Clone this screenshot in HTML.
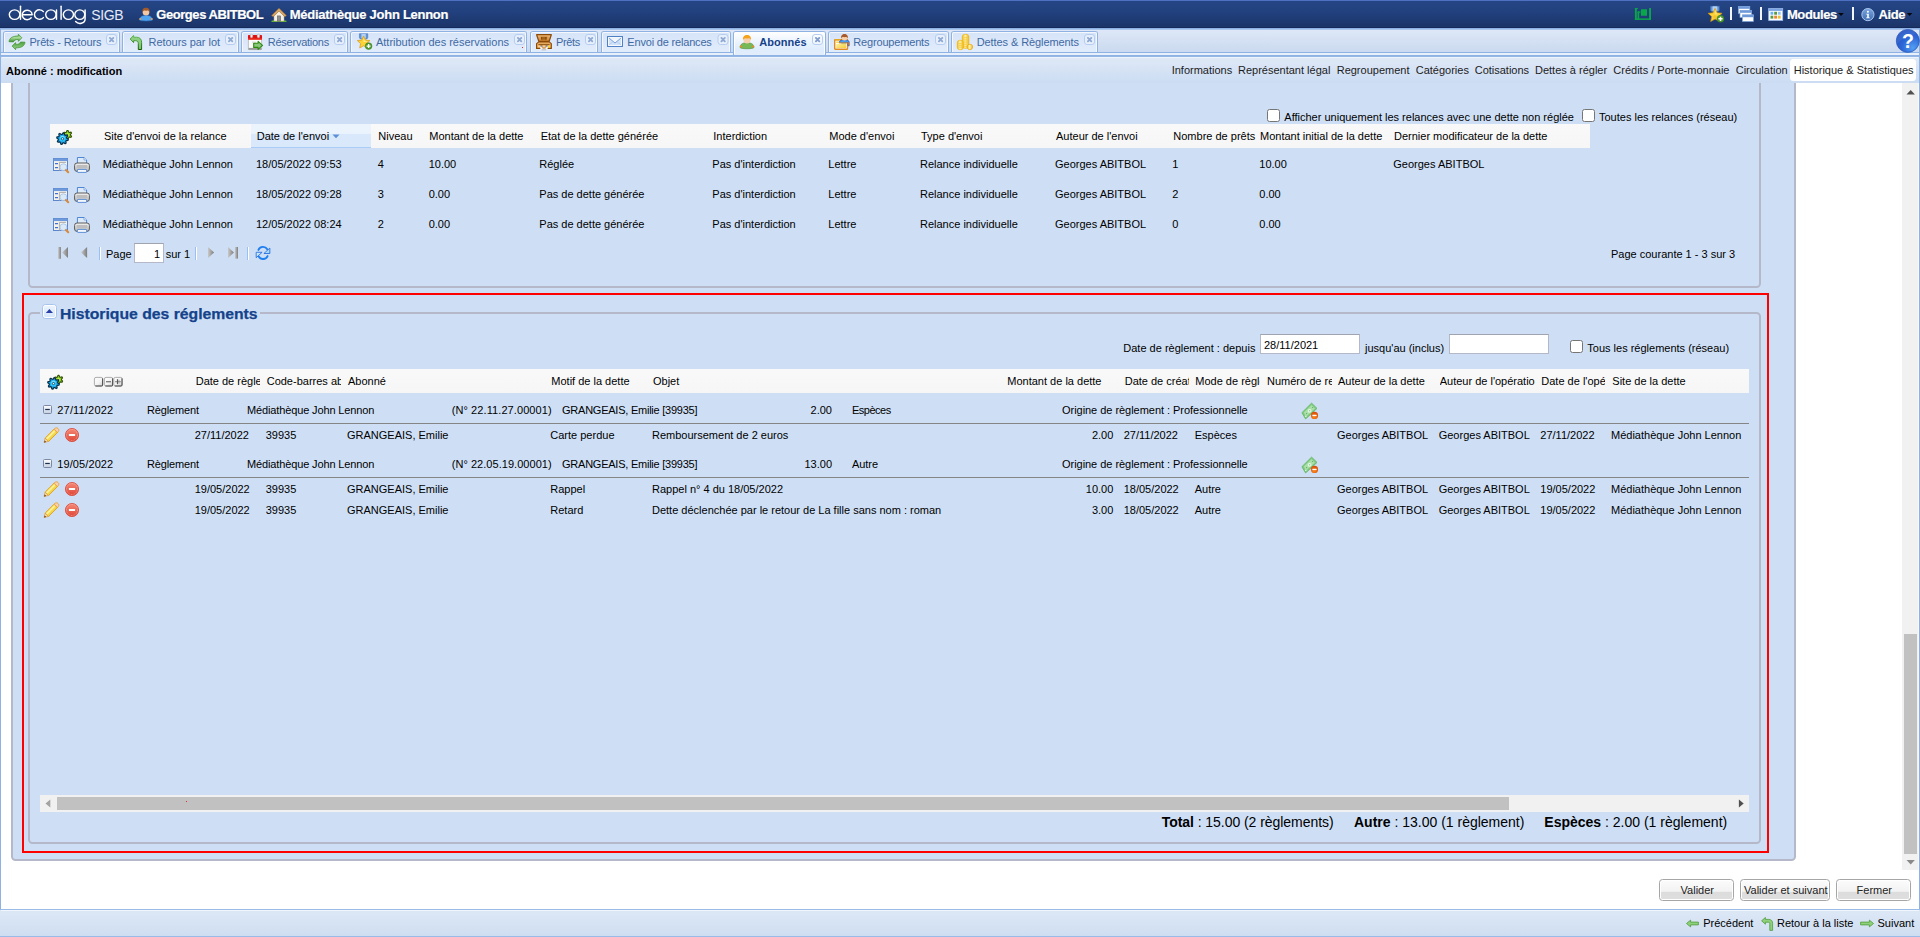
<!DOCTYPE html>
<html lang="fr"><head><meta charset="utf-8"><title>decalog SIGB</title>
<style>
html,body{margin:0;padding:0;width:1920px;height:937px;overflow:hidden;background:#fff;}
body{position:relative;font-family:"Liberation Sans",sans-serif;font-size:11px;color:#000;}
.b{position:absolute;box-sizing:border-box;}
.t{position:absolute;white-space:nowrap;font-family:"Liberation Sans",sans-serif;}
svg{overflow:visible;display:block}
</style></head><body>
<div class="b" style="left:0px;top:0px;width:1920px;height:28px;background:linear-gradient(#264585 0%,#21407d 45%,#1b3468 100%);"></div>
<div class="b" style="left:0px;top:0px;width:1920px;height:1px;background:#4d70c0;"></div>
<div class="b" style="left:0px;top:27px;width:1920px;height:1px;background:#15295a;"></div>
<div class="b" style="left:0px;top:28px;width:1920px;height:29px;background:linear-gradient(#dde7f6 0%,#dde7f6 8%,#cbdaf0 82%,#cbdaf0 100%);"></div>
<div class="b" style="left:0px;top:28px;width:1920px;height:1px;background:#8db2e3;"></div>
<div class="b" style="left:0px;top:29px;width:1920px;height:1px;background:#a9c5eb;"></div>
<div class="b" style="left:0px;top:52px;width:1920px;height:1px;background:#8db2e3;"></div>
<div class="b" style="left:0px;top:53px;width:1920px;height:2px;background:#e8f0fc;"></div>
<div class="b" style="left:0px;top:55px;width:1920px;height:1px;background:#8db2e3;"></div>
<div class="b" style="left:0px;top:56px;width:1920px;height:1px;background:#94b7e6;"></div>
<div class="b" style="left:3px;top:31px;width:117px;height:21px;border:1px solid #8db2e3;border-bottom:none;border-radius:3px 3px 0 0;background:linear-gradient(#d6e4f8 0%,#dce8fa 50%,#e1ecfb 100%);"></div>
<div class="b" style="left:4px;top:32px;width:115px;height:20px;border:1px solid #f4f8fe;border-bottom:none;border-radius:2px 2px 0 0;"></div>
<div class="b" style="left:122px;top:31px;width:117px;height:21px;border:1px solid #8db2e3;border-bottom:none;border-radius:3px 3px 0 0;background:linear-gradient(#d6e4f8 0%,#dce8fa 50%,#e1ecfb 100%);"></div>
<div class="b" style="left:123px;top:32px;width:115px;height:20px;border:1px solid #f4f8fe;border-bottom:none;border-radius:2px 2px 0 0;"></div>
<div class="b" style="left:241px;top:31px;width:107px;height:21px;border:1px solid #8db2e3;border-bottom:none;border-radius:3px 3px 0 0;background:linear-gradient(#d6e4f8 0%,#dce8fa 50%,#e1ecfb 100%);"></div>
<div class="b" style="left:242px;top:32px;width:105px;height:20px;border:1px solid #f4f8fe;border-bottom:none;border-radius:2px 2px 0 0;"></div>
<div class="b" style="left:350px;top:31px;width:177px;height:21px;border:1px solid #8db2e3;border-bottom:none;border-radius:3px 3px 0 0;background:linear-gradient(#d6e4f8 0%,#dce8fa 50%,#e1ecfb 100%);"></div>
<div class="b" style="left:351px;top:32px;width:175px;height:20px;border:1px solid #f4f8fe;border-bottom:none;border-radius:2px 2px 0 0;"></div>
<div class="b" style="left:530px;top:31px;width:68px;height:21px;border:1px solid #8db2e3;border-bottom:none;border-radius:3px 3px 0 0;background:linear-gradient(#d6e4f8 0%,#dce8fa 50%,#e1ecfb 100%);"></div>
<div class="b" style="left:531px;top:32px;width:66px;height:20px;border:1px solid #f4f8fe;border-bottom:none;border-radius:2px 2px 0 0;"></div>
<div class="b" style="left:601px;top:31px;width:130px;height:21px;border:1px solid #8db2e3;border-bottom:none;border-radius:3px 3px 0 0;background:linear-gradient(#d6e4f8 0%,#dce8fa 50%,#e1ecfb 100%);"></div>
<div class="b" style="left:602px;top:32px;width:128px;height:20px;border:1px solid #f4f8fe;border-bottom:none;border-radius:2px 2px 0 0;"></div>
<div class="b" style="left:733px;top:31px;width:93px;height:24px;border:1px solid #8db2e3;border-bottom:none;border-radius:3px 3px 0 0;background:linear-gradient(#ffffff 0%,#f3f8fe 25%,#deecfd 75%,#e3edfb 100%);"></div>
<div class="b" style="left:734px;top:32px;width:91px;height:22px;border:1px solid #fff;border-bottom:none;border-radius:2px 2px 0 0;"></div>
<div class="b" style="left:828px;top:31px;width:121px;height:21px;border:1px solid #8db2e3;border-bottom:none;border-radius:3px 3px 0 0;background:linear-gradient(#d6e4f8 0%,#dce8fa 50%,#e1ecfb 100%);"></div>
<div class="b" style="left:829px;top:32px;width:119px;height:20px;border:1px solid #f4f8fe;border-bottom:none;border-radius:2px 2px 0 0;"></div>
<div class="b" style="left:951px;top:31px;width:147px;height:21px;border:1px solid #8db2e3;border-bottom:none;border-radius:3px 3px 0 0;background:linear-gradient(#d6e4f8 0%,#dce8fa 50%,#e1ecfb 100%);"></div>
<div class="b" style="left:952px;top:32px;width:145px;height:20px;border:1px solid #f4f8fe;border-bottom:none;border-radius:2px 2px 0 0;"></div>
<div class="b" style="left:1px;top:83px;width:1918px;height:826px;background:#fff;"></div>
<div class="b" style="left:11px;top:70px;width:1785px;height:791px;background:#cedff5;border:2px solid #b5b8c8;border-radius:4.5px;"></div>
<div class="b" style="left:28px;top:70px;width:1733px;height:218px;border:2px solid #b5b8c8;border-radius:4.5px;"></div>
<div class="b" style="left:1px;top:57px;width:1918px;height:26px;background:linear-gradient(#dfe9f7 0%,#d8e4f5 40%,#cbdcf3 100%);"></div>
<div class="b" style="left:2px;top:57px;width:1916px;height:1px;background:#eef4fb;"></div>
<div class="b" style="left:1790px;top:59px;width:126px;height:22px;background:#fff;border-radius:3.5px;"></div>
<div class="b" style="left:0px;top:28px;width:1px;height:881px;background:#8db2e3;"></div>
<div class="b" style="left:1919px;top:28px;width:1px;height:881px;background:#8db2e3;"></div>
<div class="b" style="left:22px;top:293px;width:1747px;height:560px;border:2px solid #f00;"></div>
<div class="b" style="left:28px;top:312px;width:1733px;height:532px;border:2px solid #b5b8c8;border-radius:4.5px;"></div>
<div class="b" style="left:40px;top:304px;width:220px;height:18px;background:#cedff5;"></div>
<div class="b" style="left:50px;top:124px;width:1540px;height:24px;background:linear-gradient(#f9f9f9,#f6f6f6);"></div>
<div class="b" style="left:251px;top:124px;width:120px;height:24px;background:linear-gradient(#ebf3fd 0%,#ebf3fd 41%,#d9e8fb 43%,#d9e8fb 100%);border-bottom:1px solid #aaccf6;"></div>
<div class="b" style="left:134px;top:243px;width:30px;height:20px;background:#fff;border:1px solid #b5b8c8;border-top-color:#a0a3b0;"></div>
<div class="b" style="left:1260px;top:334px;width:100px;height:20px;background:#fff;border:1px solid #b5b8c8;border-top-color:#a0a3b0;"></div>
<div class="b" style="left:1449px;top:334px;width:100px;height:20px;background:#fff;border:1px solid #b5b8c8;border-top-color:#a0a3b0;"></div>
<div class="b" style="left:40px;top:369px;width:1709px;height:24px;background:linear-gradient(#f9f9f9,#f6f6f6);"></div>
<div class="b" style="left:40px;top:423px;width:1709px;height:1px;background:#858585;"></div>
<div class="b" style="left:40px;top:477px;width:1709px;height:1px;background:#858585;"></div>
<div class="b" style="left:40px;top:795px;width:1709px;height:17px;background:#f1f1f1;"></div>
<div class="b" style="left:57px;top:797px;width:1452px;height:13px;background:#c1c1c1;"></div>
<div class="b" style="left:186px;top:801px;width:1px;height:1px;background:#e03030;"></div>
<div class="b" style="left:522px;top:47px;width:1px;height:1px;background:#e03030;"></div>
<div class="b" style="left:1902px;top:83px;width:16px;height:787px;background:#f1f1f1;"></div>
<div class="b" style="left:1918px;top:83px;width:1px;height:787px;background:#f8f8f8;"></div>
<div class="b" style="left:1904px;top:634px;width:13px;height:220px;background:#c1c1c1;"></div>
<div class="b" style="left:0px;top:909px;width:1920px;height:28px;background:linear-gradient(#dde8f6,#cfdef1);border-top:1px solid #99bbe8;border-bottom:1px solid #99bbe8;"></div>
<div class="b" style="left:1px;top:910px;width:1918px;height:1px;background:#f1f6fc;"></div>
<div class="b" style="left:1659px;top:879px;width:75px;height:22px;border:1px solid #a6a6a6;border-radius:3.5px;background:#fff;"></div>
<div class="b" style="left:1661px;top:881px;width:71px;height:18px;border-radius:1.5px;background:linear-gradient(#fbfbfb 0%,#f2f2f2 58%,#dcdcdc 60%,#dedede 100%);"></div>
<div class="b" style="left:1740px;top:879px;width:90px;height:22px;border:1px solid #a6a6a6;border-radius:3.5px;background:#fff;"></div>
<div class="b" style="left:1742px;top:881px;width:86px;height:18px;border-radius:1.5px;background:linear-gradient(#fbfbfb 0%,#f2f2f2 58%,#dcdcdc 60%,#dedede 100%);"></div>
<div class="b" style="left:1836px;top:879px;width:75px;height:22px;border:1px solid #a6a6a6;border-radius:3.5px;background:#fff;"></div>
<div class="b" style="left:1838px;top:881px;width:71px;height:18px;border-radius:1.5px;background:linear-gradient(#fbfbfb 0%,#f2f2f2 58%,#dcdcdc 60%,#dedede 100%);"></div>
<div class="b" style="left:1267px;top:109px;width:13px;height:13px;background:#fff;border:1px solid #767676;border-radius:2.5px;"></div>
<div class="b" style="left:1582px;top:109px;width:13px;height:13px;background:#fff;border:1px solid #767676;border-radius:2.5px;"></div>
<div class="b" style="left:1570px;top:340px;width:13px;height:13px;background:#fff;border:1px solid #767676;border-radius:2.5px;"></div>
<span class="t" style="left:91.3px;top:7.0px;font-size:14px;line-height:16px;color:#e4eaf8;letter-spacing:-0.417px;">SIGB</span>
<span class="t" style="left:156.3px;top:7.1px;font-size:13px;line-height:16px;font-weight:bold;color:#fff;letter-spacing:-0.444px;-webkit-text-stroke:0.2px #fff;text-shadow:0.5px 0.5px 0 rgba(10,20,50,.35);">Georges ABITBOL</span>
<span class="t" style="left:289.8px;top:7.1px;font-size:13px;line-height:16px;font-weight:bold;color:#fff;letter-spacing:-0.273px;-webkit-text-stroke:0.2px #fff;text-shadow:0.5px 0.5px 0 rgba(10,20,50,.35);">Médiathèque John Lennon</span>
<span class="t" style="left:1786.9px;top:7.1px;font-size:13px;line-height:16px;font-weight:bold;color:#fff;letter-spacing:-0.391px;-webkit-text-stroke:0.2px #fff;text-shadow:0.5px 0.5px 0 rgba(10,20,50,.35);">Modules</span>
<span class="t" style="left:1878.5px;top:7.1px;font-size:13px;line-height:16px;font-weight:bold;color:#fff;letter-spacing:-0.393px;-webkit-text-stroke:0.2px #fff;text-shadow:0.5px 0.5px 0 rgba(10,20,50,.35);">Aide</span>
<div class="b" style="left:1730px;top:7px;width:2px;height:13px;background:#f2f5fc;"></div>
<div class="b" style="left:1760px;top:7px;width:2px;height:13px;background:#f2f5fc;"></div>
<div class="b" style="left:1852px;top:7px;width:2px;height:13px;background:#f2f5fc;"></div>
<span class="t" style="left:29.4px;top:35.0px;font-size:11px;line-height:14px;color:#416aa3;letter-spacing:-0.131px;">Prêts - Retours</span>
<span class="t" style="left:148.5px;top:35.0px;font-size:11px;line-height:14px;color:#416aa3;letter-spacing:-0.044px;">Retours par lot</span>
<span class="t" style="left:267.8px;top:35.0px;font-size:11px;line-height:14px;color:#416aa3;letter-spacing:-0.250px;">Réservations</span>
<span class="t" style="left:376px;top:35.0px;font-size:11px;line-height:14px;color:#416aa3;letter-spacing:-0.011px;">Attribution des réservations</span>
<span class="t" style="left:556px;top:35.0px;font-size:11px;line-height:14px;color:#416aa3;letter-spacing:-0.338px;">Prêts</span>
<span class="t" style="left:627.3px;top:35.0px;font-size:11px;line-height:14px;color:#416aa3;letter-spacing:-0.180px;">Envoi de relances</span>
<span class="t" style="left:853.3px;top:35.0px;font-size:11px;line-height:14px;color:#416aa3;letter-spacing:-0.175px;">Regroupements</span>
<span class="t" style="left:976.7px;top:35.0px;font-size:11px;line-height:14px;color:#416aa3;letter-spacing:-0.086px;">Dettes &amp; Règlements</span>
<span class="t" style="left:759.3px;top:35.0px;font-size:11px;line-height:14px;font-weight:bold;color:#15428b;letter-spacing:0.048px;">Abonnés</span>
<span class="t" style="left:6px;top:64.0px;font-size:11px;line-height:14px;font-weight:bold;">Abonné : modification</span>
<span class="t" style="left:1171.7px;top:63.0px;font-size:11px;line-height:14px;color:#1c1c1c;">Informations</span>
<span class="t" style="left:1238px;top:63.0px;font-size:11px;line-height:14px;color:#1c1c1c;">Représentant légal</span>
<span class="t" style="left:1336.7px;top:63.0px;font-size:11px;line-height:14px;color:#1c1c1c;">Regroupement</span>
<span class="t" style="left:1415.7px;top:63.0px;font-size:11px;line-height:14px;color:#1c1c1c;">Catégories</span>
<span class="t" style="left:1474.7px;top:63.0px;font-size:11px;line-height:14px;color:#1c1c1c;">Cotisations</span>
<span class="t" style="left:1535px;top:63.0px;font-size:11px;line-height:14px;color:#1c1c1c;">Dettes à régler</span>
<span class="t" style="left:1613.3px;top:63.0px;font-size:11px;line-height:14px;color:#1c1c1c;">Crédits / Porte-monnaie</span>
<span class="t" style="left:1735.7px;top:63.0px;font-size:11px;line-height:14px;color:#1c1c1c;">Circulation</span>
<span class="t" style="left:1793.7px;top:63.0px;font-size:11px;line-height:14px;color:#1c1c1c;">Historique &amp; Statistiques</span>
<span class="t" style="left:1284.3px;top:110.0px;font-size:11px;line-height:14px;">Afficher uniquement les relances avec une dette non réglée</span>
<span class="t" style="left:1599px;top:110.0px;font-size:11px;line-height:14px;">Toutes les relances (réseau)</span>
<span class="t" style="left:104px;top:129.0px;font-size:11px;line-height:14px;">Site d'envoi de la relance</span>
<span class="t" style="left:256.7px;top:129.0px;font-size:11px;line-height:14px;">Date de l'envoi</span>
<span class="t" style="left:378.3px;top:129.0px;font-size:11px;line-height:14px;">Niveau</span>
<span class="t" style="left:429.3px;top:129.0px;font-size:11px;line-height:14px;">Montant de la dette</span>
<span class="t" style="left:540.7px;top:129.0px;font-size:11px;line-height:14px;">Etat de la dette générée</span>
<span class="t" style="left:713.3px;top:129.0px;font-size:11px;line-height:14px;">Interdiction</span>
<span class="t" style="left:829.3px;top:129.0px;font-size:11px;line-height:14px;">Mode d'envoi</span>
<span class="t" style="left:921px;top:129.0px;font-size:11px;line-height:14px;">Type d'envoi</span>
<span class="t" style="left:1056px;top:129.0px;font-size:11px;line-height:14px;">Auteur de l'envoi</span>
<span class="t" style="left:1173.3px;top:129.0px;font-size:11px;line-height:14px;">Nombre de prêts</span>
<span class="t" style="left:1260px;top:129.0px;font-size:11px;line-height:14px;">Montant initial de la dette</span>
<span class="t" style="left:1394px;top:129.0px;font-size:11px;line-height:14px;">Dernier modificateur de la dette</span>
<span class="t" style="left:102.7px;top:157.0px;font-size:11px;line-height:14px;">Médiathèque John Lennon</span>
<span class="t" style="left:256px;top:157.0px;font-size:11px;line-height:14px;">18/05/2022 09:53</span>
<span class="t" style="left:377.7px;top:157.0px;font-size:11px;line-height:14px;">4</span>
<span class="t" style="left:428.7px;top:157.0px;font-size:11px;line-height:14px;">10.00</span>
<span class="t" style="left:539.3px;top:157.0px;font-size:11px;line-height:14px;">Réglée</span>
<span class="t" style="left:712.3px;top:157.0px;font-size:11px;line-height:14px;">Pas d'interdiction</span>
<span class="t" style="left:828.3px;top:157.0px;font-size:11px;line-height:14px;">Lettre</span>
<span class="t" style="left:920px;top:157.0px;font-size:11px;line-height:14px;">Relance individuelle</span>
<span class="t" style="left:1055px;top:157.0px;font-size:11px;line-height:14px;">Georges ABITBOL</span>
<span class="t" style="left:1172.3px;top:157.0px;font-size:11px;line-height:14px;">1</span>
<span class="t" style="left:1259.3px;top:157.0px;font-size:11px;line-height:14px;">10.00</span>
<span class="t" style="left:1393.3px;top:157.0px;font-size:11px;line-height:14px;">Georges ABITBOL</span>
<span class="t" style="left:102.7px;top:187.0px;font-size:11px;line-height:14px;">Médiathèque John Lennon</span>
<span class="t" style="left:256px;top:187.0px;font-size:11px;line-height:14px;">18/05/2022 09:28</span>
<span class="t" style="left:377.7px;top:187.0px;font-size:11px;line-height:14px;">3</span>
<span class="t" style="left:428.7px;top:187.0px;font-size:11px;line-height:14px;">0.00</span>
<span class="t" style="left:539.3px;top:187.0px;font-size:11px;line-height:14px;">Pas de dette générée</span>
<span class="t" style="left:712.3px;top:187.0px;font-size:11px;line-height:14px;">Pas d'interdiction</span>
<span class="t" style="left:828.3px;top:187.0px;font-size:11px;line-height:14px;">Lettre</span>
<span class="t" style="left:920px;top:187.0px;font-size:11px;line-height:14px;">Relance individuelle</span>
<span class="t" style="left:1055px;top:187.0px;font-size:11px;line-height:14px;">Georges ABITBOL</span>
<span class="t" style="left:1172.3px;top:187.0px;font-size:11px;line-height:14px;">2</span>
<span class="t" style="left:1259.3px;top:187.0px;font-size:11px;line-height:14px;">0.00</span>
<span class="t" style="left:102.7px;top:217.0px;font-size:11px;line-height:14px;">Médiathèque John Lennon</span>
<span class="t" style="left:256px;top:217.0px;font-size:11px;line-height:14px;">12/05/2022 08:24</span>
<span class="t" style="left:377.7px;top:217.0px;font-size:11px;line-height:14px;">2</span>
<span class="t" style="left:428.7px;top:217.0px;font-size:11px;line-height:14px;">0.00</span>
<span class="t" style="left:539.3px;top:217.0px;font-size:11px;line-height:14px;">Pas de dette générée</span>
<span class="t" style="left:712.3px;top:217.0px;font-size:11px;line-height:14px;">Pas d'interdiction</span>
<span class="t" style="left:828.3px;top:217.0px;font-size:11px;line-height:14px;">Lettre</span>
<span class="t" style="left:920px;top:217.0px;font-size:11px;line-height:14px;">Relance individuelle</span>
<span class="t" style="left:1055px;top:217.0px;font-size:11px;line-height:14px;">Georges ABITBOL</span>
<span class="t" style="left:1172.3px;top:217.0px;font-size:11px;line-height:14px;">0</span>
<span class="t" style="left:1259.3px;top:217.0px;font-size:11px;line-height:14px;">0.00</span>
<span class="t" style="left:106px;top:247.0px;font-size:11px;line-height:14px;">Page</span>
<span class="t" style="left:165.7px;top:247.0px;font-size:11px;line-height:14px;">sur 1</span>
<span class="t" style="right:1760px;top:247.0px;font-size:11px;line-height:14px;">1</span>
<span class="t" style="left:1611px;top:247.0px;font-size:11px;line-height:14px;">Page courante 1 - 3 sur 3</span>
<span class="t" style="left:60.4px;top:304.0px;font-size:14.7px;line-height:20px;font-weight:bold;color:#15428b;transform-origin:0 50%;transform:scaleX(1.0712);-webkit-text-stroke:0.25px #15428b;">Historique des réglements</span>
<span class="t" style="left:1123.3px;top:341.0px;font-size:11px;line-height:14px;">Date de règlement : depuis</span>
<span class="t" style="left:1264px;top:338.0px;font-size:11px;line-height:14px;">28/11/2021</span>
<span class="t" style="left:1365px;top:341.0px;font-size:11px;line-height:14px;">jusqu'au (inclus)</span>
<span class="t" style="left:1587.3px;top:341.0px;font-size:11px;line-height:14px;">Tous les réglements (réseau)</span>
<span class="t" style="left:195.7px;top:374.0px;font-size:11px;line-height:14px;width:64.5px;overflow:hidden;">Date de règlement</span>
<span class="t" style="left:266.7px;top:374.0px;font-size:11px;line-height:14px;width:74px;overflow:hidden;">Code-barres abonné</span>
<span class="t" style="left:348px;top:374.0px;font-size:11px;line-height:14px;">Abonné</span>
<span class="t" style="left:551.3px;top:374.0px;font-size:11px;line-height:14px;">Motif de la dette</span>
<span class="t" style="left:653px;top:374.0px;font-size:11px;line-height:14px;">Objet</span>
<span class="t" style="left:1007.3px;top:374.0px;font-size:11px;line-height:14px;">Montant de la dette</span>
<span class="t" style="left:1124.7px;top:374.0px;font-size:11px;line-height:14px;width:64.5px;overflow:hidden;">Date de création</span>
<span class="t" style="left:1195.3px;top:374.0px;font-size:11px;line-height:14px;width:64.5px;overflow:hidden;">Mode de règlement</span>
<span class="t" style="left:1267px;top:374.0px;font-size:11px;line-height:14px;width:64.5px;overflow:hidden;">Numéro de reçu</span>
<span class="t" style="left:1338px;top:374.0px;font-size:11px;line-height:14px;">Auteur de la dette</span>
<span class="t" style="left:1439.7px;top:374.0px;font-size:11px;line-height:14px;width:95px;overflow:hidden;">Auteur de l'opération</span>
<span class="t" style="left:1541.3px;top:374.0px;font-size:11px;line-height:14px;width:64px;overflow:hidden;">Date de l'opération</span>
<span class="t" style="left:1612.3px;top:374.0px;font-size:11px;line-height:14px;">Site de la dette</span>
<span class="t" style="left:57.3px;top:403.0px;font-size:11px;line-height:14px;letter-spacing:0.175px;">27/11/2022</span>
<span class="t" style="left:147px;top:403.0px;font-size:11px;line-height:14px;letter-spacing:-0.134px;">Règlement</span>
<span class="t" style="left:247px;top:403.0px;font-size:11px;line-height:14px;letter-spacing:-0.130px;">Médiathèque John Lennon</span>
<span class="t" style="left:451.7px;top:403.0px;font-size:11px;line-height:14px;letter-spacing:0.086px;">(N° 22.11.27.00001)</span>
<span class="t" style="left:562px;top:403.0px;font-size:11px;line-height:14px;letter-spacing:-0.237px;">GRANGEAIS, Emilie [39935]</span>
<span class="t" style="right:1088px;top:403.0px;font-size:11px;line-height:14px;">2.00</span>
<span class="t" style="left:852px;top:403.0px;font-size:11px;line-height:14px;letter-spacing:-0.500px;">Espèces</span>
<span class="t" style="left:1062px;top:403.0px;font-size:11px;line-height:14px;letter-spacing:-0.037px;">Origine de règlement : Professionnelle</span>
<span class="t" style="left:57.3px;top:457.0px;font-size:11px;line-height:14px;letter-spacing:0.094px;">19/05/2022</span>
<span class="t" style="left:147px;top:457.0px;font-size:11px;line-height:14px;letter-spacing:-0.134px;">Règlement</span>
<span class="t" style="left:247px;top:457.0px;font-size:11px;line-height:14px;letter-spacing:-0.130px;">Médiathèque John Lennon</span>
<span class="t" style="left:451.7px;top:457.0px;font-size:11px;line-height:14px;letter-spacing:0.042px;">(N° 22.05.19.00001)</span>
<span class="t" style="left:562px;top:457.0px;font-size:11px;line-height:14px;letter-spacing:-0.237px;">GRANGEAIS, Emilie [39935]</span>
<span class="t" style="right:1088px;top:457.0px;font-size:11px;line-height:14px;">13.00</span>
<span class="t" style="left:852px;top:457.0px;font-size:11px;line-height:14px;letter-spacing:-0.059px;">Autre</span>
<span class="t" style="left:1062px;top:457.0px;font-size:11px;line-height:14px;letter-spacing:-0.037px;">Origine de règlement : Professionnelle</span>
<span class="t" style="left:194.7px;top:428.0px;font-size:11px;line-height:14px;">27/11/2022</span>
<span class="t" style="left:265.7px;top:428.0px;font-size:11px;line-height:14px;">39935</span>
<span class="t" style="left:347px;top:428.0px;font-size:11px;line-height:14px;">GRANGEAIS, Emilie</span>
<span class="t" style="left:550.3px;top:428.0px;font-size:11px;line-height:14px;">Carte perdue</span>
<span class="t" style="left:652px;top:428.0px;font-size:11px;line-height:14px;">Remboursement de 2 euros</span>
<span class="t" style="right:806.7px;top:428.0px;font-size:11px;line-height:14px;">2.00</span>
<span class="t" style="left:1123.7px;top:428.0px;font-size:11px;line-height:14px;">27/11/2022</span>
<span class="t" style="left:1194.7px;top:428.0px;font-size:11px;line-height:14px;">Espèces</span>
<span class="t" style="left:1337px;top:428.0px;font-size:11px;line-height:14px;">Georges ABITBOL</span>
<span class="t" style="left:1438.7px;top:428.0px;font-size:11px;line-height:14px;">Georges ABITBOL</span>
<span class="t" style="left:1540.3px;top:428.0px;font-size:11px;line-height:14px;">27/11/2022</span>
<span class="t" style="left:1611px;top:428.0px;font-size:11px;line-height:14px;">Médiathèque John Lennon</span>
<span class="t" style="left:194.7px;top:482.0px;font-size:11px;line-height:14px;">19/05/2022</span>
<span class="t" style="left:265.7px;top:482.0px;font-size:11px;line-height:14px;">39935</span>
<span class="t" style="left:347px;top:482.0px;font-size:11px;line-height:14px;">GRANGEAIS, Emilie</span>
<span class="t" style="left:550.3px;top:482.0px;font-size:11px;line-height:14px;">Rappel</span>
<span class="t" style="left:652px;top:482.0px;font-size:11px;line-height:14px;">Rappel n° 4 du 18/05/2022</span>
<span class="t" style="right:806.7px;top:482.0px;font-size:11px;line-height:14px;">10.00</span>
<span class="t" style="left:1123.7px;top:482.0px;font-size:11px;line-height:14px;">18/05/2022</span>
<span class="t" style="left:1194.7px;top:482.0px;font-size:11px;line-height:14px;">Autre</span>
<span class="t" style="left:1337px;top:482.0px;font-size:11px;line-height:14px;">Georges ABITBOL</span>
<span class="t" style="left:1438.7px;top:482.0px;font-size:11px;line-height:14px;">Georges ABITBOL</span>
<span class="t" style="left:1540.3px;top:482.0px;font-size:11px;line-height:14px;">19/05/2022</span>
<span class="t" style="left:1611px;top:482.0px;font-size:11px;line-height:14px;">Médiathèque John Lennon</span>
<span class="t" style="left:194.7px;top:503.0px;font-size:11px;line-height:14px;">19/05/2022</span>
<span class="t" style="left:265.7px;top:503.0px;font-size:11px;line-height:14px;">39935</span>
<span class="t" style="left:347px;top:503.0px;font-size:11px;line-height:14px;">GRANGEAIS, Emilie</span>
<span class="t" style="left:550.3px;top:503.0px;font-size:11px;line-height:14px;">Retard</span>
<span class="t" style="left:652px;top:503.0px;font-size:11px;line-height:14px;">Dette déclenchée par le retour de La fille sans nom : roman</span>
<span class="t" style="right:806.7px;top:503.0px;font-size:11px;line-height:14px;">3.00</span>
<span class="t" style="left:1123.7px;top:503.0px;font-size:11px;line-height:14px;">18/05/2022</span>
<span class="t" style="left:1194.7px;top:503.0px;font-size:11px;line-height:14px;">Autre</span>
<span class="t" style="left:1337px;top:503.0px;font-size:11px;line-height:14px;">Georges ABITBOL</span>
<span class="t" style="left:1438.7px;top:503.0px;font-size:11px;line-height:14px;">Georges ABITBOL</span>
<span class="t" style="left:1540.3px;top:503.0px;font-size:11px;line-height:14px;">19/05/2022</span>
<span class="t" style="left:1611px;top:503.0px;font-size:11px;line-height:14px;">Médiathèque John Lennon</span>
<span class="t" style="left:1161.7px;top:813.0px;font-size:14px;line-height:18px;letter-spacing:-0.05px;"><b>Total</b> : 15.00 (2 règlements)</span>
<span class="t" style="left:1354px;top:813.0px;font-size:14px;line-height:18px;"><b>Autre</b> : 13.00 (1 règlement)</span>
<span class="t" style="left:1544.3px;top:813.0px;font-size:14px;line-height:18px;"><b>Espèces</b> : 2.00 (1 règlement)</span>
<span class="t" style="left:1637.3px;top:883.0px;font-size:11px;line-height:14px;color:#222;width:120px;text-align:center;">Valider</span>
<span class="t" style="left:1725.8px;top:883.0px;font-size:11px;line-height:14px;color:#222;width:120px;text-align:center;">Valider et suivant</span>
<span class="t" style="left:1814.3px;top:883.0px;font-size:11px;line-height:14px;color:#222;width:120px;text-align:center;">Fermer</span>
<span class="t" style="left:1703.2px;top:916.0px;font-size:11px;line-height:14px;">Précédent</span>
<span class="t" style="left:1777px;top:916.0px;font-size:11px;line-height:14px;">Retour à la liste</span>
<span class="t" style="left:1877.5px;top:916.0px;font-size:11px;line-height:14px;">Suivant</span>
<svg class="b" style="left:9px;top:34px;" width="16" height="16" viewBox="0 0 16 16"><defs><linearGradient id="ggn" x1="0" y1="0" x2="0" y2="1"><stop offset="0" stop-color="#6fbd5e"/><stop offset=".45" stop-color="#a9dc9a"/><stop offset="1" stop-color="#3f8f30"/></linearGradient><linearGradient id="ggd" x1="0" y1="0" x2="0" y2="1"><stop offset="0" stop-color="#9ad68c"/><stop offset="1" stop-color="#4fa040"/></linearGradient></defs><path d="M0 7.7C0.5 3.6 4 2 9.35 2L9.35 0.2L12.9 3.8L9.35 7.4L9.35 5.5C6.6 5.4 5 6.4 4.5 7.9Z" fill="url(#ggn)" stroke="#3f8f30" stroke-width=".7" stroke-linejoin="round"/><path d="M0 7.7C0.5 3.6 4 2 9.35 2L9.35 0.2L12.9 3.8L9.35 7.4L9.35 5.5C6.6 5.4 5 6.4 4.5 7.9Z" transform="rotate(180 8 7.95)" fill="url(#ggd)" stroke="#3f8f30" stroke-width=".7" stroke-linejoin="round"/></svg>
<svg class="b" style="left:128px;top:34px;" width="16" height="16" viewBox="0 0 16 16"><defs><linearGradient id="grt" x1="0" y1="0" x2="0" y2="1"><stop offset="0" stop-color="#8fd384"/><stop offset=".5" stop-color="#8ccc80"/><stop offset="1" stop-color="#7cc470"/></linearGradient><linearGradient id="grs" x1="0" y1="0" x2="0" y2="1"><stop offset="0" stop-color="#6cbc5c"/><stop offset=".5" stop-color="#3c8c2c"/><stop offset="1" stop-color="#145808"/></linearGradient></defs><path d="M2.2 5L5.6 1.3L5.6 3.2L8.6 3.2C11.9 3.2 13.6 5.3 13.6 8.4L13.6 15.5L10.3 15.5L10.3 9.4C10.3 7.6 9.2 6.7 7.6 6.7L5.6 6.7L5.6 8.6Z" fill="url(#grt)" stroke="url(#grs)" stroke-width="1" stroke-linejoin="round"/></svg>
<svg class="b" style="left:248px;top:34px;" width="16" height="16" viewBox="0 0 16 16"><rect x="0.4" y="1.4" width="13.2" height="14.2" rx=".8" fill="#fdfdfd" stroke="#b4b4b4" stroke-width=".8"/><rect x="0.4" y="13.9" width="13.2" height="1.9" fill="#9a9a9a"/><rect x="0" y="1" width="14" height="5" rx=".8" fill="#e50e0e"/><rect x="0" y="4.6" width="14" height="1.4" fill="#f04a3a"/><rect x="2.3" y="0.2" width="2.4" height="3.6" rx="1" fill="#e9eeee" stroke="#9a9a9a" stroke-width=".4"/><rect x="9.2" y="0.2" width="2.5" height="3.6" rx="1" fill="#e9eeee" stroke="#9a9a9a" stroke-width=".4"/><path d="M4 8.2H8" stroke="#c8c8c8" stroke-width=".8"/><path d="M5.7 9.3L10.1 9.3L10.1 7.4L14.5 11.4L10.1 15.4L10.1 13.4L5.7 13.4Z" fill="#8cc67a" stroke="#2a8a0c" stroke-width="1.1" stroke-linejoin="round"/></svg>
<svg class="b" style="left:356px;top:33px;" width="16" height="17" viewBox="0 0 16 17"><g transform="translate(0 0.5)"><path d="M3.4 0.2H11.8V4.4L10.8 5.4H4.4L3.4 4.4Z" fill="#5f92d6" stroke="#3f6fb5" stroke-width=".5"/><rect x="5.4" y="0.3" width="4.4" height="4.8" fill="#b4cff0"/><path d="M7.6 2.6L9.5 6.6L13.9 7.1L10.6 10.1L11.5 14.5L7.6 12.3L3.7 14.5L4.6 10.1L1.3 7.1L5.7 6.6Z" fill="#fbd335" stroke="#d99a14" stroke-width=".7" stroke-linejoin="round"/><path d="M7.6 4.4L8.8 7.3L11.8 7.7L7.6 8.8Z" fill="#fdf0a8" opacity=".85"/><circle cx="12.6" cy="12.6" r="3.4" fill="#4c9a2e" stroke="#3a7a20" stroke-width=".5"/><path d="M12.6 10.6V14.6M10.6 12.6H14.6" stroke="#fff" stroke-width="1.4"/></g></svg>
<svg class="b" style="left:536px;top:34px;" width="16" height="16" viewBox="0 0 16 16"><defs><linearGradient id="gbr" x1="0" y1="0" x2="0" y2="1"><stop offset="0" stop-color="#f3bd7a"/><stop offset="1" stop-color="#c8802e"/></linearGradient></defs><path d="M0.6 0.7L15.3 0.7L13.2 7.3L2.8 7.3Z" fill="url(#gbr)" stroke="#8a4a08" stroke-width="1.2" stroke-linejoin="round"/><path d="M4.6 2.8H11.4L10.6 5.7H5.4Z" fill="#a5661c"/><path d="M5.6 3V5.6M9.8 3V5.6" stroke="#7a4408" stroke-width=".8"/><path d="M2.8 7.9L13.2 7.9L15.3 9.6L15.3 14.4L0.6 14.4L0.6 9.6Z" fill="#f0b468" stroke="#8a4a08" stroke-width="1.2" stroke-linejoin="round"/><path d="M2.4 10.4H13.6" stroke="#8e5412" stroke-width="1"/><path d="M2 12.6H14" stroke="#f7cf98" stroke-width="1.2"/><rect x="12.2" y="12" width="1.9" height="1.3" fill="#f2e21c"/><path d="M4.4 12.2H6.4M9.6 12.2H11.6" stroke="#3c4c6c" stroke-width="1.3"/><path d="M4.9 12.6V13.4C4.9 15 6.3 15.3 8 15.3C9.7 15.3 11.1 15 11.1 13.4V12.6" fill="none" stroke="#fafafa" stroke-width="1.5"/><path d="M5.6 15.8H10.4" stroke="#8a8a8a" stroke-width=".6"/></svg>
<svg class="b" style="left:607px;top:34px;" width="16" height="16" viewBox="0 0 16 16"><rect x="0.6" y="2.6" width="14.8" height="9.8" fill="#cfe2f8" stroke="#4a7cc2" stroke-width="1.1"/><rect x="1.6" y="3.6" width="12.8" height="7.8" fill="none" stroke="#fff" stroke-width=".9"/><path d="M2.2 4.2L8 9L13.8 4.2Z" fill="#f3f8fe"/><path d="M2.2 4.2L8 9L13.8 4.2" fill="none" stroke="#7a9ed8" stroke-width="1"/><path d="M2.2 10.8L6 7.6M13.8 10.8L10 7.6" stroke="#a9c6ee" stroke-width=".7"/></svg>
<svg class="b" style="left:739px;top:34px;" width="17" height="17" viewBox="0 0 17 17"><g transform="translate(0.5 0.5)"><path d="M0.6 13.2C0.6 9.6 3.2 8.2 7.5 8.2C11.8 8.2 14.4 9.6 14.4 13.2C12.6 14.6 2.4 14.6 0.6 13.2Z" fill="#78b856" stroke="#4f8f34" stroke-width=".6"/><circle cx="1.3" cy="12" r="1.1" fill="#ef8a2a"/><circle cx="13.7" cy="12" r="1.1" fill="#ef8a2a"/><circle cx="7.5" cy="5.4" r="3.5" fill="#f6cfae"/><path d="M3.6 5.6C3 2 5 0.4 7.5 0.4C10 0.4 12 2 11.4 5.6C10.6 3.8 9.6 3.4 7.5 4.2C5.6 3.2 4.4 4 3.6 5.6Z" fill="#f6a21c"/></g></svg>
<svg class="b" style="left:834px;top:34px;" width="16" height="16" viewBox="0 0 16 16"><defs><linearGradient id="gfo" x1="0" y1="0" x2="1" y2="1"><stop offset="0" stop-color="#fdf0a0"/><stop offset="1" stop-color="#f4cc38"/></linearGradient></defs><rect x="0.7" y="5.7" width="12.8" height="9.6" rx=".6" fill="#fff" stroke="#e08a20" stroke-width="1.4"/><path d="M2.2 9.8H12V14H2.2Z" fill="url(#gfo)"/><path d="M2.2 7.4H6V9H2.2Z" fill="#f6d85a"/><path d="M7.2 8.6H12V10.2H7.2Z" fill="#b4d294"/><path d="M0.7 5.7H6.6" stroke="#e3a820" stroke-width="1.4"/><path d="M5.4 8C5.8 6.4 7.6 5.8 10.5 5.8C13.4 5.8 15 6.6 15.2 8L15.2 11.8L13.9 11.8L13.9 8.4L5.4 8.4Z" fill="#4aa6f0" stroke="#2a4cc0" stroke-width=".7" stroke-linejoin="round"/><rect x="14.6" y="8.2" width="1.2" height="3.2" rx=".5" fill="#f08a20"/><path d="M5 8.5H13.8V9.4H5Z" fill="#e08a20"/><circle cx="10.5" cy="3.6" r="3" fill="#f6cfa8"/><path d="M7.2 4.4C6.6 1.6 8.4 0 10.5 0C12.6 0 14.4 1.6 13.8 4.4C13 3 12 2.8 10.5 3.2C9 2.6 8 3 7.2 4.4Z" fill="#a85a28"/></svg>
<svg class="b" style="left:957px;top:34px;" width="16" height="16" viewBox="0 0 16 16"><defs><linearGradient id="gco" x1="0" y1="0" x2="1" y2="0"><stop offset="0" stop-color="#f2bc12"/><stop offset=".45" stop-color="#fff3b4"/><stop offset="1" stop-color="#f0b612"/></linearGradient></defs><rect x="5.3" y="0.3" width="6.5" height="14" rx="2.6" fill="url(#gco)" stroke="#eeb408" stroke-width=".7"/><path d="M6.6 3.4H10.4" stroke="#f3c636" stroke-width=".7"/><path d="M6.6 5.2H10.4" stroke="#f3c636" stroke-width=".7"/><path d="M6.6 7H10.4" stroke="#f3c636" stroke-width=".7"/><path d="M6.6 8.8H10.4" stroke="#f3c636" stroke-width=".7"/><path d="M6.6 10.6H10.4" stroke="#f3c636" stroke-width=".7"/><path d="M6.6 12.4H10.4" stroke="#f3c636" stroke-width=".7"/><rect x="0.3" y="6.3" width="6" height="9.4" rx="2.4" fill="url(#gco)" stroke="#eeb408" stroke-width=".7"/><path d="M1.6 9.6H5" stroke="#f3c636" stroke-width=".7"/><path d="M1.6 11.4H5" stroke="#f3c636" stroke-width=".7"/><path d="M1.6 13.2H5" stroke="#f3c636" stroke-width=".7"/><path d="M10.2 12.4C10.2 10.9 11.4 10.4 12.9 10.4C14.4 10.4 15.6 10.9 15.6 12.4C15.6 14.6 14.6 15.7 12.9 15.7C11.2 15.7 10.2 14.6 10.2 12.4Z" fill="url(#gco)" stroke="#e8a408" stroke-width=".7"/></svg>
<svg class="b" style="left:106px;top:34px;" width="11" height="11" viewBox="0 0 11 11"><rect x="0.5" y="0.5" width="10" height="10" rx="2.6" fill="#fff" fill-opacity=".35" stroke="#b5cdf0" stroke-width="1"/><path d="M3.9 3.9L7.3 7.3M7.3 3.9L3.9 7.3" stroke="#8ea9d3" stroke-width="1.9" stroke-linecap="round"/></svg>
<svg class="b" style="left:225px;top:34px;" width="11" height="11" viewBox="0 0 11 11"><rect x="0.5" y="0.5" width="10" height="10" rx="2.6" fill="#fff" fill-opacity=".35" stroke="#b5cdf0" stroke-width="1"/><path d="M3.9 3.9L7.3 7.3M7.3 3.9L3.9 7.3" stroke="#8ea9d3" stroke-width="1.9" stroke-linecap="round"/></svg>
<svg class="b" style="left:334px;top:34px;" width="11" height="11" viewBox="0 0 11 11"><rect x="0.5" y="0.5" width="10" height="10" rx="2.6" fill="#fff" fill-opacity=".35" stroke="#b5cdf0" stroke-width="1"/><path d="M3.9 3.9L7.3 7.3M7.3 3.9L3.9 7.3" stroke="#8ea9d3" stroke-width="1.9" stroke-linecap="round"/></svg>
<svg class="b" style="left:514px;top:34px;" width="11" height="11" viewBox="0 0 11 11"><rect x="0.5" y="0.5" width="10" height="10" rx="2.6" fill="#fff" fill-opacity=".35" stroke="#b5cdf0" stroke-width="1"/><path d="M3.9 3.9L7.3 7.3M7.3 3.9L3.9 7.3" stroke="#8ea9d3" stroke-width="1.9" stroke-linecap="round"/></svg>
<svg class="b" style="left:585px;top:34px;" width="11" height="11" viewBox="0 0 11 11"><rect x="0.5" y="0.5" width="10" height="10" rx="2.6" fill="#fff" fill-opacity=".35" stroke="#b5cdf0" stroke-width="1"/><path d="M3.9 3.9L7.3 7.3M7.3 3.9L3.9 7.3" stroke="#8ea9d3" stroke-width="1.9" stroke-linecap="round"/></svg>
<svg class="b" style="left:717px;top:34px;" width="12" height="11" viewBox="0 0 12 11"><g transform="translate(0.5 0)"><rect x="0.5" y="0.5" width="10" height="10" rx="2.6" fill="#fff" fill-opacity=".35" stroke="#b5cdf0" stroke-width="1"/><path d="M3.9 3.9L7.3 7.3M7.3 3.9L3.9 7.3" stroke="#8ea9d3" stroke-width="1.9" stroke-linecap="round"/></g></svg>
<svg class="b" style="left:812px;top:34px;" width="11" height="11" viewBox="0 0 11 11"><rect x="0.5" y="0.5" width="10" height="10" rx="2.6" fill="#fff" fill-opacity=".35" stroke="#b5cdf0" stroke-width="1"/><path d="M3.9 3.9L7.3 7.3M7.3 3.9L3.9 7.3" stroke="#7f9ccc" stroke-width="1.9" stroke-linecap="round"/></svg>
<svg class="b" style="left:935px;top:34px;" width="11" height="11" viewBox="0 0 11 11"><rect x="0.5" y="0.5" width="10" height="10" rx="2.6" fill="#fff" fill-opacity=".35" stroke="#b5cdf0" stroke-width="1"/><path d="M3.9 3.9L7.3 7.3M7.3 3.9L3.9 7.3" stroke="#8ea9d3" stroke-width="1.9" stroke-linecap="round"/></svg>
<svg class="b" style="left:1084px;top:34px;" width="11" height="11" viewBox="0 0 11 11"><rect x="0.5" y="0.5" width="10" height="10" rx="2.6" fill="#fff" fill-opacity=".35" stroke="#b5cdf0" stroke-width="1"/><path d="M3.9 3.9L7.3 7.3M7.3 3.9L3.9 7.3" stroke="#8ea9d3" stroke-width="1.9" stroke-linecap="round"/></svg>
<svg class="b" style="left:0px;top:0px;" width="90" height="28" viewBox="0 0 90 28"><ellipse cx="14.6" cy="14.6" rx="5.3" ry="4.75" fill="none" stroke="#fff" stroke-width="1.45" stroke-linecap="round" stroke-linejoin="round"/><path d="M20.5 6.3V19.3" fill="none" stroke="#fff" stroke-width="1.45" stroke-linecap="round" stroke-linejoin="round"/><path d="M22.4 14.7H32.2A5 4.75 0 1 0 31.2 17.8" fill="none" stroke="#fff" stroke-width="1.45" stroke-linecap="round" stroke-linejoin="round"/><path d="M43.4 11.6A5.05 4.75 0 1 0 43.4 17.6" fill="none" stroke="#fff" stroke-width="1.45" stroke-linecap="round" stroke-linejoin="round"/><ellipse cx="50.9" cy="14.6" rx="5.2" ry="4.75" fill="none" stroke="#fff" stroke-width="1.45" stroke-linecap="round" stroke-linejoin="round"/><path d="M56.5 9.9V19.3" fill="none" stroke="#fff" stroke-width="1.45" stroke-linecap="round" stroke-linejoin="round"/><path d="M61.1 6.3V19.3" fill="none" stroke="#fff" stroke-width="1.45" stroke-linecap="round" stroke-linejoin="round"/><ellipse cx="68.4" cy="14.6" rx="5.1" ry="4.75" fill="none" stroke="#fff" stroke-width="1.45" stroke-linecap="round" stroke-linejoin="round"/><ellipse cx="79.8" cy="14.6" rx="5.0" ry="4.75" fill="none" stroke="#fff" stroke-width="1.45" stroke-linecap="round" stroke-linejoin="round"/><path d="M85.1 9.9V18.8C85.1 24 78.4 24.6 75.6 21.6" fill="none" stroke="#fff" stroke-width="1.45" stroke-linecap="round" stroke-linejoin="round"/></svg>
<svg class="b" style="left:139px;top:7px;" width="14" height="15" viewBox="0 0 14 15"><g transform="translate(0 0.5)"><path d="M0.6 12.6C0.6 9.2 3 8 7 8C11 8 13.4 9.2 13.4 12.6C11.6 13.8 2.4 13.8 0.6 12.6Z" fill="#4fa3ee" stroke="#2a6fc0" stroke-width=".5"/><circle cx="1.2" cy="11.6" r="1" fill="#e99a4a"/><circle cx="12.8" cy="11.6" r="1" fill="#e99a4a"/><circle cx="7" cy="4.8" r="3.3" fill="#f3c7a2"/><path d="M3.4 4.8C3 1.6 4.8 0.3 7 0.3C9.2 0.3 11 1.6 10.6 4.8C9.6 3 8.6 2.8 7 3.4C5.2 2.6 4.2 3.2 3.4 4.8Z" fill="#a45a28"/></g></svg>
<svg class="b" style="left:271px;top:7px;" width="16" height="16" viewBox="0 0 16 16"><g transform="translate(0 0.5)"><path d="M0.5 13.2C3 12.2 13 12.2 15.5 13.2L15.5 14.4L0.5 14.4Z" fill="#62b234"/><path d="M3 7.4L8 2.6L13 7.4L13 13.6L3 13.6Z" fill="#f6f1e6" stroke="#b9a98a" stroke-width=".5"/><path d="M0.6 8L8 0.8L15.4 8L13.8 9.2L8 3.6L2.2 9.2Z" fill="#dba868" stroke="#9a6a2c" stroke-width=".6" stroke-linejoin="round"/><rect x="6.3" y="8.4" width="3.4" height="5.2" fill="#8d8d8d" stroke="#5c5c5c" stroke-width=".5"/></g></svg>
<svg class="b" style="left:1634px;top:7px;" width="18" height="14" viewBox="0 0 18 14"><g transform="translate(0.5 0.5)"><g fill="#0aa64a"><rect x="0.4" y="0.5" width="1.9" height="11.9"/><rect x="0.4" y="0.5" width="3" height="1.1"/><rect x="3" y="4" width="1.7" height="8.2"/><rect x="3" y="4" width="2.9" height="1.3"/><rect x="6.4" y="1.7" width="6.1" height="6.6" rx=".6"/><rect x="0.4" y="10.9" width="16.1" height="1.5"/><rect x="14.6" y="0.5" width="1.9" height="11.9"/></g></g></svg>
<svg class="b" style="left:1707px;top:6px;" width="18" height="16" viewBox="0 0 18 16"><g transform="translate(0.5 0)"><path d="M3 0.2H11.8V4.6L10.6 5.6H4.2L3 4.6Z" fill="#5f92d6" stroke="#3f6fb5" stroke-width=".5"/><rect x="5" y="0.3" width="4.8" height="5" fill="#b4cff0"/><path d="M7.6 2.4L9.7 6.8L14.6 7.3L11 10.6L12 15.4L7.6 13L3.2 15.4L4.2 10.6L0.6 7.3L5.5 6.8Z" fill="#fbd238" stroke="#d4920e" stroke-width=".7" stroke-linejoin="round"/><path d="M7.6 4L9 7.4L12.4 7.8L7.6 8.6Z" fill="#fdeb9a" opacity=".8"/><path d="M4.8 11L7.4 9.2L10.4 11.4L7.6 12.4Z" fill="#f6b82a" opacity=".6"/><circle cx="13" cy="12.8" r="3.5" fill="#4a9a2c" stroke="#3a7a20" stroke-width=".5"/><path d="M13 10.7V14.9M10.9 12.8H15.1" stroke="#fff" stroke-width="1.5"/></g></svg>
<svg class="b" style="left:1738px;top:6px;" width="16" height="16" viewBox="0 0 16 16"><rect x="0.4" y="0.4" width="11.4" height="7" fill="#fff" stroke="#7fa6de" stroke-width=".7"/><rect x="0.4" y="0.4" width="11.4" height="2.4" fill="#6f99d9"/><rect x="2" y="4.4" width="11.6" height="7" fill="#fff" stroke="#7fa6de" stroke-width=".7"/><rect x="2" y="4.4" width="11.6" height="2.4" fill="#6f99d9"/><rect x="4.4" y="8.8" width="11" height="6.6" fill="#fff" stroke="#7fa6de" stroke-width=".7"/><rect x="4.4" y="8.8" width="11" height="2.4" fill="#6f99d9"/></svg>
<svg class="b" style="left:1768px;top:8px;" width="16" height="14" viewBox="0 0 16 14"><g transform="translate(0.3 0.2)"><rect x="0.4" y="0.4" width="14" height="11.8" fill="#fdfdfd" stroke="#9dbbe6" stroke-width=".8"/><rect x="0.4" y="0.4" width="14" height="2.3" fill="#7aa5e2"/><rect x="2.2" y="3.6" width="2.8" height="2.9" fill="#6cb2f2"/><rect x="5.9" y="3.6" width="2.8" height="2.9" fill="#5a9a3c"/><rect x="9.600000000000001" y="3.6" width="2.8" height="2.9" fill="#93c4f1"/><rect x="2.2" y="7.5" width="2.8" height="2.9" fill="#5a9a3c"/><rect x="5.9" y="7.5" width="2.8" height="2.9" fill="#f08232"/><rect x="9.600000000000001" y="7.5" width="2.8" height="2.9" fill="#e9c13c"/></g></svg>
<svg class="b" style="left:1838px;top:13px;" width="7" height="4" viewBox="0 0 7 4"><g transform="translate(0.2 0)"><path d="M0 0H5.6L2.8 3.1Z" fill="#05070c"/></g></svg>
<svg class="b" style="left:1906px;top:13px;" width="7" height="4" viewBox="0 0 7 4"><g transform="translate(0.8 0)"><path d="M0 0H5.6L2.8 3.1Z" fill="#05070c"/></g></svg>
<svg class="b" style="left:1861px;top:7px;" width="14" height="15" viewBox="0 0 14 15"><g transform="translate(0 0.8)"><defs><linearGradient id="gi" x1="0" y1="0" x2="0" y2="1"><stop offset="0" stop-color="#7aa5dd"/><stop offset="1" stop-color="#3f6db5"/></linearGradient></defs><circle cx="6.9" cy="6.8" r="6.1" fill="url(#gi)" stroke="#a9c6ee" stroke-width="1"/><circle cx="6.9" cy="3.9" r="1.05" fill="#fff"/><path d="M5.3 5.9H7.8V9.6H8.8V10.5H5.1V9.6H6.2V6.8H5.3Z" fill="#fff"/></g></svg>
<svg class="b" style="left:1895px;top:28px;" width="25" height="26" viewBox="0 0 25 26"><g transform="translate(0.5 0.5)"><defs><radialGradient id="gh" cx=".72" cy=".8" r=".95"><stop offset="0" stop-color="#529ef2"/><stop offset=".5" stop-color="#2c66d6"/><stop offset="1" stop-color="#2250c0"/></radialGradient></defs><circle cx="12.3" cy="12.4" r="11.5" fill="url(#gh)" stroke="#2a54b8" stroke-width=".7"/><path d="M1.6 15.5A11 11 0 0 1 21 5.6C14 6.5 6 10 1.6 15.5Z" fill="#fff" opacity=".07"/><text x="12.5" y="19.4" text-anchor="middle" font-family="Liberation Sans" font-weight="bold" font-size="19.5" fill="#fff">?</text></g></svg>
<svg class="b" style="left:55px;top:130px;" width="18" height="16" viewBox="0 0 18 16"><g transform="translate(0 0.2)"><path d="M16.61 6.15L16.07 7.14L14.42 6.86L13.77 7.25L13.26 8.85L12.14 8.88L11.55 7.30L10.89 6.94L9.25 7.30L8.67 6.34L9.73 5.05L9.72 4.29L8.59 3.05L9.13 2.06L10.78 2.34L11.43 1.95L11.94 0.35L13.06 0.32L13.65 1.90L14.31 2.26L15.95 1.90L16.53 2.86L15.47 4.15L15.48 4.91Z" fill="#90d41c" stroke="#35520c" stroke-width="1.1" stroke-linejoin="round"/><circle cx="12.6" cy="4.6" r="1.5" fill="#c4ec6a"/><circle cx="12.6" cy="4.6" r=".6" fill="#35520c"/><path d="M13.27 8.99L13.04 10.10L11.28 10.44L10.81 11.14L11.16 12.90L10.22 13.53L8.73 12.52L7.91 12.68L6.91 14.17L5.80 13.94L5.46 12.18L4.76 11.71L3.00 12.06L2.37 11.12L3.38 9.63L3.22 8.81L1.73 7.81L1.96 6.70L3.72 6.36L4.19 5.66L3.84 3.90L4.78 3.27L6.27 4.28L7.09 4.12L8.09 2.63L9.20 2.86L9.54 4.62L10.24 5.09L12.00 4.74L12.63 5.68L11.62 7.17L11.78 7.99Z" fill="#1da4ea" stroke="#0a3048" stroke-width="1.2" stroke-linejoin="round"/><circle cx="7.5" cy="8.4" r="2.9" fill="#2fc8fa"/><path d="M5.6 7.2A2.3 2.3 0 0 1 9.4 7.2" stroke="#bfeeff" stroke-width=".7" fill="none"/><circle cx="7.5" cy="8.6" r="1.1" fill="#fff" stroke="#0a3048" stroke-width=".7"/></g></svg>
<svg class="b" style="left:53px;top:158px;" width="16" height="15" viewBox="0 0 16 15"><rect x="0.5" y="0.5" width="14" height="12" fill="#f6f3ec" stroke="#5b86cf" stroke-width="1"/><rect x="0.5" y="0.5" width="14" height="2.6" fill="#6e9adc"/><path d="M2 5.6H5M2 9.6H5" stroke="#3f6fd8" stroke-width="1.2"/><path d="M6.4 13V4.4H13" fill="none" stroke="#9a9a9a" stroke-width=".8"/><circle cx="10.4" cy="9.2" r="3.4" fill="#d6e6f8" fill-opacity=".85" stroke="#a9c6ea" stroke-width=".9"/><path d="M13 12L15.2 14.2" stroke="#d98a3a" stroke-width="2" stroke-linecap="round"/></svg>
<svg class="b" style="left:74px;top:157px;" width="16" height="16" viewBox="0 0 16 16"><defs><linearGradient id="gp" x1="0" y1="0" x2="0" y2="1"><stop offset="0" stop-color="#f4f4f4"/><stop offset=".5" stop-color="#d4d4d4"/><stop offset="1" stop-color="#b4b4b4"/></linearGradient></defs><path d="M3.4 0.5H10L12.6 3V7H3.4Z" fill="#dce9f9" stroke="#4f86d4" stroke-width="1" stroke-linejoin="round"/><path d="M10 0.5V3H12.6" fill="#f3f8fe" stroke="#4f86d4" stroke-width=".6"/><rect x="0.6" y="6" width="14.8" height="8.4" rx="2.4" fill="url(#gp)" stroke="#5a5a5a" stroke-width="1"/><rect x="2.6" y="8" width="10.8" height="3" fill="#bdbdbd"/><rect x="3.4" y="12.4" width="9.2" height="3" rx=".6" fill="#f4f8fe" stroke="#4f86d4" stroke-width=".9"/></svg>
<svg class="b" style="left:53px;top:188px;" width="16" height="15" viewBox="0 0 16 15"><rect x="0.5" y="0.5" width="14" height="12" fill="#f6f3ec" stroke="#5b86cf" stroke-width="1"/><rect x="0.5" y="0.5" width="14" height="2.6" fill="#6e9adc"/><path d="M2 5.6H5M2 9.6H5" stroke="#3f6fd8" stroke-width="1.2"/><path d="M6.4 13V4.4H13" fill="none" stroke="#9a9a9a" stroke-width=".8"/><circle cx="10.4" cy="9.2" r="3.4" fill="#d6e6f8" fill-opacity=".85" stroke="#a9c6ea" stroke-width=".9"/><path d="M13 12L15.2 14.2" stroke="#d98a3a" stroke-width="2" stroke-linecap="round"/></svg>
<svg class="b" style="left:74px;top:187px;" width="16" height="16" viewBox="0 0 16 16"><defs><linearGradient id="gp" x1="0" y1="0" x2="0" y2="1"><stop offset="0" stop-color="#f4f4f4"/><stop offset=".5" stop-color="#d4d4d4"/><stop offset="1" stop-color="#b4b4b4"/></linearGradient></defs><path d="M3.4 0.5H10L12.6 3V7H3.4Z" fill="#dce9f9" stroke="#4f86d4" stroke-width="1" stroke-linejoin="round"/><path d="M10 0.5V3H12.6" fill="#f3f8fe" stroke="#4f86d4" stroke-width=".6"/><rect x="0.6" y="6" width="14.8" height="8.4" rx="2.4" fill="url(#gp)" stroke="#5a5a5a" stroke-width="1"/><rect x="2.6" y="8" width="10.8" height="3" fill="#bdbdbd"/><rect x="3.4" y="12.4" width="9.2" height="3" rx=".6" fill="#f4f8fe" stroke="#4f86d4" stroke-width=".9"/></svg>
<svg class="b" style="left:53px;top:218px;" width="16" height="15" viewBox="0 0 16 15"><rect x="0.5" y="0.5" width="14" height="12" fill="#f6f3ec" stroke="#5b86cf" stroke-width="1"/><rect x="0.5" y="0.5" width="14" height="2.6" fill="#6e9adc"/><path d="M2 5.6H5M2 9.6H5" stroke="#3f6fd8" stroke-width="1.2"/><path d="M6.4 13V4.4H13" fill="none" stroke="#9a9a9a" stroke-width=".8"/><circle cx="10.4" cy="9.2" r="3.4" fill="#d6e6f8" fill-opacity=".85" stroke="#a9c6ea" stroke-width=".9"/><path d="M13 12L15.2 14.2" stroke="#d98a3a" stroke-width="2" stroke-linecap="round"/></svg>
<svg class="b" style="left:74px;top:217px;" width="16" height="16" viewBox="0 0 16 16"><defs><linearGradient id="gp" x1="0" y1="0" x2="0" y2="1"><stop offset="0" stop-color="#f4f4f4"/><stop offset=".5" stop-color="#d4d4d4"/><stop offset="1" stop-color="#b4b4b4"/></linearGradient></defs><path d="M3.4 0.5H10L12.6 3V7H3.4Z" fill="#dce9f9" stroke="#4f86d4" stroke-width="1" stroke-linejoin="round"/><path d="M10 0.5V3H12.6" fill="#f3f8fe" stroke="#4f86d4" stroke-width=".6"/><rect x="0.6" y="6" width="14.8" height="8.4" rx="2.4" fill="url(#gp)" stroke="#5a5a5a" stroke-width="1"/><rect x="2.6" y="8" width="10.8" height="3" fill="#bdbdbd"/><rect x="3.4" y="12.4" width="9.2" height="3" rx=".6" fill="#f4f8fe" stroke="#4f86d4" stroke-width=".9"/></svg>
<svg class="b" style="left:58px;top:247px;" width="11" height="12" viewBox="0 0 11 12"><defs><linearGradient id="gg" x1="0" y1="0" x2="1" y2="0"><stop offset="0" stop-color="#c9c9c9"/><stop offset="1" stop-color="#7d7d7d"/></linearGradient></defs><rect x="0.1" y="0" width="2.8" height="11.8" fill="url(#gg)"/><path d="M4.1 5.6L10 0V11Z" fill="url(#gg)"/></svg>
<svg class="b" style="left:81px;top:247px;" width="7" height="12" viewBox="0 0 7 12"><defs><linearGradient id="gg" x1="0" y1="0" x2="1" y2="0"><stop offset="0" stop-color="#c9c9c9"/><stop offset="1" stop-color="#7d7d7d"/></linearGradient></defs><path d="M0 5.6L6.1 0V11Z" fill="url(#gg)"/></svg>
<div class="b" style="left:99px;top:247px;width:1px;height:13px;background:#98c0f4;"></div>
<div class="b" style="left:100px;top:247px;width:1px;height:13px;background:#fff;"></div>
<div class="b" style="left:195px;top:247px;width:1px;height:13px;background:#98c0f4;"></div>
<div class="b" style="left:196px;top:247px;width:1px;height:13px;background:#fff;"></div>
<svg class="b" style="left:208px;top:247px;" width="7" height="12" viewBox="0 0 7 12"><defs><linearGradient id="gg" x1="0" y1="0" x2="1" y2="0"><stop offset="0" stop-color="#c9c9c9"/><stop offset="1" stop-color="#7d7d7d"/></linearGradient></defs><path d="M6.1 5.6L0 0V11Z" fill="url(#gg)"/></svg>
<svg class="b" style="left:228px;top:247px;" width="11" height="12" viewBox="0 0 11 12"><defs><linearGradient id="gg" x1="0" y1="0" x2="1" y2="0"><stop offset="0" stop-color="#c9c9c9"/><stop offset="1" stop-color="#7d7d7d"/></linearGradient></defs><path d="M5.9 5.6L0 0V11Z" fill="url(#gg)"/><rect x="7" y="0" width="3" height="11.6" fill="url(#gg)"/></svg>
<div class="b" style="left:247px;top:247px;width:1px;height:13px;background:#98c0f4;"></div>
<div class="b" style="left:248px;top:247px;width:1px;height:13px;background:#fff;"></div>
<svg class="b" style="left:256px;top:246px;" width="15" height="14" viewBox="0 0 15 14"><defs><linearGradient id="grf" x1="0" y1="0" x2="1" y2="1"><stop offset="0" stop-color="#e4f3fe"/><stop offset="1" stop-color="#8ccdfa"/></linearGradient></defs><path d="M2.4 3.9A5 5 0 0 1 11.3 3.3" fill="none" stroke="#1f7fee" stroke-width="1.9" stroke-linecap="round"/><path d="M13.85 2.1L13.85 7.5L7.9 7.5Z" fill="url(#grf)" stroke="#2a6fdc" stroke-width=".9" stroke-linejoin="round"/><path d="M2.7 10.5A5 5 0 0 0 11.6 10.1" fill="none" stroke="#1f7fee" stroke-width="1.9" stroke-linecap="round"/><path d="M0.2 11.7L0.2 6.3L6.1 6.3Z" fill="url(#grf)" stroke="#2a6fdc" stroke-width=".9" stroke-linejoin="round"/></svg>
<svg class="b" style="left:332px;top:134px;" width="8" height="5" viewBox="0 0 8 5"><g transform="translate(0.5 0.5)"><path d="M0 0H7L3.5 3.8Z" fill="#5b8fd6"/></g></svg>
<svg class="b" style="left:42px;top:304px;" width="15" height="15" viewBox="0 0 15 15"><defs><linearGradient id="gt" x1="0" y1="0" x2="0" y2="1"><stop offset="0" stop-color="#edf5fe"/><stop offset="1" stop-color="#d3e5fb"/></linearGradient></defs><rect x="0.5" y="0.5" width="14" height="14" rx="3" fill="url(#gt)" stroke="#a6c3ee" stroke-width="1"/><rect x="1.5" y="1.5" width="12" height="12" rx="2" fill="none" stroke="#fff" stroke-width="1"/><path d="M3.8 9L11 9L7.4 4.9Z" fill="#2a3fa6"/></svg>
<svg class="b" style="left:46px;top:375px;" width="18" height="15" viewBox="0 0 18 15"><path d="M16.61 6.15L16.07 7.14L14.42 6.86L13.77 7.25L13.26 8.85L12.14 8.88L11.55 7.30L10.89 6.94L9.25 7.30L8.67 6.34L9.73 5.05L9.72 4.29L8.59 3.05L9.13 2.06L10.78 2.34L11.43 1.95L11.94 0.35L13.06 0.32L13.65 1.90L14.31 2.26L15.95 1.90L16.53 2.86L15.47 4.15L15.48 4.91Z" fill="#90d41c" stroke="#35520c" stroke-width="1.1" stroke-linejoin="round"/><circle cx="12.6" cy="4.6" r="1.5" fill="#c4ec6a"/><circle cx="12.6" cy="4.6" r=".6" fill="#35520c"/><path d="M13.27 8.99L13.04 10.10L11.28 10.44L10.81 11.14L11.16 12.90L10.22 13.53L8.73 12.52L7.91 12.68L6.91 14.17L5.80 13.94L5.46 12.18L4.76 11.71L3.00 12.06L2.37 11.12L3.38 9.63L3.22 8.81L1.73 7.81L1.96 6.70L3.72 6.36L4.19 5.66L3.84 3.90L4.78 3.27L6.27 4.28L7.09 4.12L8.09 2.63L9.20 2.86L9.54 4.62L10.24 5.09L12.00 4.74L12.63 5.68L11.62 7.17L11.78 7.99Z" fill="#1da4ea" stroke="#0a3048" stroke-width="1.2" stroke-linejoin="round"/><circle cx="7.5" cy="8.4" r="2.9" fill="#2fc8fa"/><path d="M5.6 7.2A2.3 2.3 0 0 1 9.4 7.2" stroke="#bfeeff" stroke-width=".7" fill="none"/><circle cx="7.5" cy="8.6" r="1.1" fill="#fff" stroke="#0a3048" stroke-width=".7"/></svg>
<svg class="b" style="left:94px;top:377px;" width="10" height="10" viewBox="0 0 10 10"><defs><linearGradient id="gs" x1="0" y1="0" x2="1" y2="1"><stop offset="0" stop-color="#ffffff"/><stop offset=".6" stop-color="#f2f2f2"/><stop offset="1" stop-color="#c9c9c9"/></linearGradient></defs><rect x="0.4" y="0.4" width="8.4" height="8.6" rx="1.6" fill="url(#gs)" stroke="#8e8e8e" stroke-width=".7"/><path d="M8.6 1.4V8A.9 .9 0 0 1 7.6 9H1.4" fill="none" stroke="#4e4e4e" stroke-width="1"/></svg>
<svg class="b" style="left:104px;top:377px;" width="10" height="10" viewBox="0 0 10 10"><defs><linearGradient id="gs" x1="0" y1="0" x2="1" y2="1"><stop offset="0" stop-color="#ffffff"/><stop offset=".6" stop-color="#f2f2f2"/><stop offset="1" stop-color="#c9c9c9"/></linearGradient></defs><rect x="0.4" y="0.4" width="8.4" height="8.6" rx="1.6" fill="url(#gs)" stroke="#8e8e8e" stroke-width=".7"/><path d="M8.6 1.4V8A.9 .9 0 0 1 7.6 9H1.4" fill="none" stroke="#4e4e4e" stroke-width="1"/><path d="M2 4.7H7" stroke="#7a7a7a" stroke-width="1.3"/></svg>
<svg class="b" style="left:113px;top:377px;" width="11" height="10" viewBox="0 0 11 10"><g transform="translate(0.4 0)"><defs><linearGradient id="gs" x1="0" y1="0" x2="1" y2="1"><stop offset="0" stop-color="#ffffff"/><stop offset=".6" stop-color="#f2f2f2"/><stop offset="1" stop-color="#c9c9c9"/></linearGradient></defs><rect x="0.4" y="0.4" width="8.4" height="8.6" rx="1.6" fill="url(#gs)" stroke="#8e8e8e" stroke-width=".7"/><path d="M8.6 1.4V8A.9 .9 0 0 1 7.6 9H1.4" fill="none" stroke="#4e4e4e" stroke-width="1"/><path d="M1.6 4.7H7.4" stroke="#8a8a8a" stroke-width="1.1"/><path d="M4.1 2.2V7.2" stroke="#5a5a5a" stroke-width="1.2"/><path d="M5.6 2.8V6.6" stroke="#9a9a9a" stroke-width=".8"/></g></svg>
<svg class="b" style="left:43px;top:405px;" width="9" height="9" viewBox="0 0 9 9"><defs><linearGradient id="gm" x1="0" y1="0" x2="0" y2="1"><stop offset="0" stop-color="#ffffff"/><stop offset="1" stop-color="#c3cfe2"/></linearGradient></defs><rect x="0.5" y="0.5" width="8" height="8" rx="1" fill="url(#gm)" stroke="#6f7e98" stroke-width=".9"/><path d="M2.2 4.5H6.8" stroke="#1f2f4f" stroke-width="1.2"/></svg>
<svg class="b" style="left:43px;top:459px;" width="9" height="9" viewBox="0 0 9 9"><defs><linearGradient id="gm" x1="0" y1="0" x2="0" y2="1"><stop offset="0" stop-color="#ffffff"/><stop offset="1" stop-color="#c3cfe2"/></linearGradient></defs><rect x="0.5" y="0.5" width="8" height="8" rx="1" fill="url(#gm)" stroke="#6f7e98" stroke-width=".9"/><path d="M2.2 4.5H6.8" stroke="#1f2f4f" stroke-width="1.2"/></svg>
<svg class="b" style="left:1302px;top:402px;" width="17" height="18" viewBox="0 0 17 18"><g transform="translate(0 0.6)"><path d="M9.6 0.5L15 5.8L3.6 16.4L-0.1 10.1Z" fill="#7fca80" stroke="#63b466" stroke-width=".8" stroke-linejoin="round"/><path d="M9.5 2.4L13 5.9L3.9 14.2L1.8 10Z" fill="#aadfaa"/><circle cx="7.6" cy="8.2" r="1.9" fill="#e9f7e9"/><circle cx="7.6" cy="8.2" r=".8" fill="#8fd08f"/><circle cx="10.6" cy="4.9" r=".6" fill="#5aa85c"/><circle cx="4.6" cy="11" r=".6" fill="#5aa85c"/><circle cx="3.8" cy="13.8" r=".7" fill="#e9f7e9"/><defs><radialGradient id="go" cx=".45" cy=".7" r=".7"><stop offset="0" stop-color="#fb8a1e"/><stop offset="1" stop-color="#d6480a"/></radialGradient></defs><circle cx="12.5" cy="12.8" r="3.6" fill="url(#go)"/><rect x="10.4" y="12.2" width="4.2" height="1.3" fill="#fff"/></g></svg>
<svg class="b" style="left:1302px;top:456px;" width="17" height="18" viewBox="0 0 17 18"><g transform="translate(0 0.6)"><path d="M9.6 0.5L15 5.8L3.6 16.4L-0.1 10.1Z" fill="#7fca80" stroke="#63b466" stroke-width=".8" stroke-linejoin="round"/><path d="M9.5 2.4L13 5.9L3.9 14.2L1.8 10Z" fill="#aadfaa"/><circle cx="7.6" cy="8.2" r="1.9" fill="#e9f7e9"/><circle cx="7.6" cy="8.2" r=".8" fill="#8fd08f"/><circle cx="10.6" cy="4.9" r=".6" fill="#5aa85c"/><circle cx="4.6" cy="11" r=".6" fill="#5aa85c"/><circle cx="3.8" cy="13.8" r=".7" fill="#e9f7e9"/><defs><radialGradient id="go" cx=".45" cy=".7" r=".7"><stop offset="0" stop-color="#fb8a1e"/><stop offset="1" stop-color="#d6480a"/></radialGradient></defs><circle cx="12.5" cy="12.8" r="3.6" fill="url(#go)"/><rect x="10.4" y="12.2" width="4.2" height="1.3" fill="#fff"/></g></svg>
<svg class="b" style="left:43px;top:427px;" width="17" height="17" viewBox="0 0 17 17"><g transform="translate(0.8 0.8)"><path d="M0.3 14.7L1.4 10.2L4.8 13.6Z" fill="#f7d9b0" stroke="#c98a2a" stroke-width=".6" stroke-linejoin="round"/><path d="M0.3 14.7L0.9 12.6L2.4 14.1Z" fill="#5a3a10"/><path d="M1.4 10.2L10.2 1.4L13.6 4.8L4.8 13.6Z" fill="#f5e25a" stroke="#e79c1c" stroke-width=".9" stroke-linejoin="round"/><path d="M2.8 11.2L11.4 2.6" stroke="#fbf3b0" stroke-width="1.1"/><path d="M4.2 12.8L12.8 4.2" stroke="#eac63a" stroke-width=".9"/><path d="M10.2 1.4L11.4 0.4C12.4 -0.3 13.5 0 14.2 0.7C15.1 1.6 15.3 2.6 14.6 3.6L13.6 4.8Z" fill="#f9cfae" stroke="#e79c1c" stroke-width=".8" stroke-linejoin="round"/></g></svg>
<svg class="b" style="left:65px;top:428px;" width="14" height="14" viewBox="0 0 14 14"><defs><linearGradient id="gr" x1="0" y1="0" x2="0" y2="1"><stop offset="0" stop-color="#f58a78"/><stop offset="1" stop-color="#de4434"/></linearGradient></defs><circle cx="7" cy="7" r="6.6" fill="url(#gr)" stroke="#d9483a" stroke-width=".8"/><circle cx="7" cy="7" r="5.5" fill="none" stroke="#f9b8ac" stroke-width=".6" stroke-dasharray="1 .7"/><rect x="3.9" y="6" width="6.2" height="2" fill="#fff"/></svg>
<svg class="b" style="left:43px;top:481px;" width="17" height="17" viewBox="0 0 17 17"><g transform="translate(0.8 0.8)"><path d="M0.3 14.7L1.4 10.2L4.8 13.6Z" fill="#f7d9b0" stroke="#c98a2a" stroke-width=".6" stroke-linejoin="round"/><path d="M0.3 14.7L0.9 12.6L2.4 14.1Z" fill="#5a3a10"/><path d="M1.4 10.2L10.2 1.4L13.6 4.8L4.8 13.6Z" fill="#f5e25a" stroke="#e79c1c" stroke-width=".9" stroke-linejoin="round"/><path d="M2.8 11.2L11.4 2.6" stroke="#fbf3b0" stroke-width="1.1"/><path d="M4.2 12.8L12.8 4.2" stroke="#eac63a" stroke-width=".9"/><path d="M10.2 1.4L11.4 0.4C12.4 -0.3 13.5 0 14.2 0.7C15.1 1.6 15.3 2.6 14.6 3.6L13.6 4.8Z" fill="#f9cfae" stroke="#e79c1c" stroke-width=".8" stroke-linejoin="round"/></g></svg>
<svg class="b" style="left:65px;top:482px;" width="14" height="14" viewBox="0 0 14 14"><defs><linearGradient id="gr" x1="0" y1="0" x2="0" y2="1"><stop offset="0" stop-color="#f58a78"/><stop offset="1" stop-color="#de4434"/></linearGradient></defs><circle cx="7" cy="7" r="6.6" fill="url(#gr)" stroke="#d9483a" stroke-width=".8"/><circle cx="7" cy="7" r="5.5" fill="none" stroke="#f9b8ac" stroke-width=".6" stroke-dasharray="1 .7"/><rect x="3.9" y="6" width="6.2" height="2" fill="#fff"/></svg>
<svg class="b" style="left:43px;top:502px;" width="17" height="17" viewBox="0 0 17 17"><g transform="translate(0.8 0.8)"><path d="M0.3 14.7L1.4 10.2L4.8 13.6Z" fill="#f7d9b0" stroke="#c98a2a" stroke-width=".6" stroke-linejoin="round"/><path d="M0.3 14.7L0.9 12.6L2.4 14.1Z" fill="#5a3a10"/><path d="M1.4 10.2L10.2 1.4L13.6 4.8L4.8 13.6Z" fill="#f5e25a" stroke="#e79c1c" stroke-width=".9" stroke-linejoin="round"/><path d="M2.8 11.2L11.4 2.6" stroke="#fbf3b0" stroke-width="1.1"/><path d="M4.2 12.8L12.8 4.2" stroke="#eac63a" stroke-width=".9"/><path d="M10.2 1.4L11.4 0.4C12.4 -0.3 13.5 0 14.2 0.7C15.1 1.6 15.3 2.6 14.6 3.6L13.6 4.8Z" fill="#f9cfae" stroke="#e79c1c" stroke-width=".8" stroke-linejoin="round"/></g></svg>
<svg class="b" style="left:65px;top:503px;" width="14" height="14" viewBox="0 0 14 14"><defs><linearGradient id="gr" x1="0" y1="0" x2="0" y2="1"><stop offset="0" stop-color="#f58a78"/><stop offset="1" stop-color="#de4434"/></linearGradient></defs><circle cx="7" cy="7" r="6.6" fill="url(#gr)" stroke="#d9483a" stroke-width=".8"/><circle cx="7" cy="7" r="5.5" fill="none" stroke="#f9b8ac" stroke-width=".6" stroke-dasharray="1 .7"/><rect x="3.9" y="6" width="6.2" height="2" fill="#fff"/></svg>
<svg class="b" style="left:45px;top:799px;" width="7" height="10" viewBox="0 0 7 10"><g transform="translate(0.4 0.4)"><path d="M4.9 0V8L0.1 4Z" fill="#a3a3a3"/></g></svg>
<svg class="b" style="left:1738px;top:799px;" width="7" height="10" viewBox="0 0 7 10"><g transform="translate(0.9 0.4)"><path d="M0 0V8L4.8 4Z" fill="#505050"/></g></svg>
<svg class="b" style="left:1906px;top:90px;" width="10" height="5" viewBox="0 0 10 5"><g transform="translate(0.5 0)"><path d="M0 4.6H8.4L4.2 0Z" fill="#505050"/></g></svg>
<svg class="b" style="left:1906px;top:860px;" width="10" height="5" viewBox="0 0 10 5"><g transform="translate(0.5 0)"><path d="M0 0H8.4L4.2 4.6Z" fill="#8a8a8a"/></g></svg>
<svg class="b" style="left:1686px;top:919px;" width="13" height="9" viewBox="0 0 13 9"><g transform="translate(0 0.5)"><path d="M0.5 4L4.6 0.6V2.6H12.4V5.4H4.6V7.4Z" fill="#8fd07a" stroke="#4f9a3c" stroke-width=".8" stroke-linejoin="round"/></g></svg>
<svg class="b" style="left:1761px;top:917px;" width="13" height="14" viewBox="0 0 13 14"><path d="M0.6 3.8L4.4 0.5V2.4H7.6C10.2 2.4 11.6 3.8 11.6 6.4V13.4H8.8V6.8C8.8 5.6 8.2 5.2 7.2 5.2H4.4V7.2Z" fill="#8fd07a" stroke="#4f9a3c" stroke-width=".8" stroke-linejoin="round"/></svg>
<svg class="b" style="left:1860px;top:919px;" width="14" height="9" viewBox="0 0 14 9"><g transform="translate(0 0.5)"><path d="M13.5 4L9.4 0.6V2.6H0.6V5.4H9.4V7.4Z" fill="#8fd07a" stroke="#4f9a3c" stroke-width=".8" stroke-linejoin="round"/></g></svg>
</body></html>
